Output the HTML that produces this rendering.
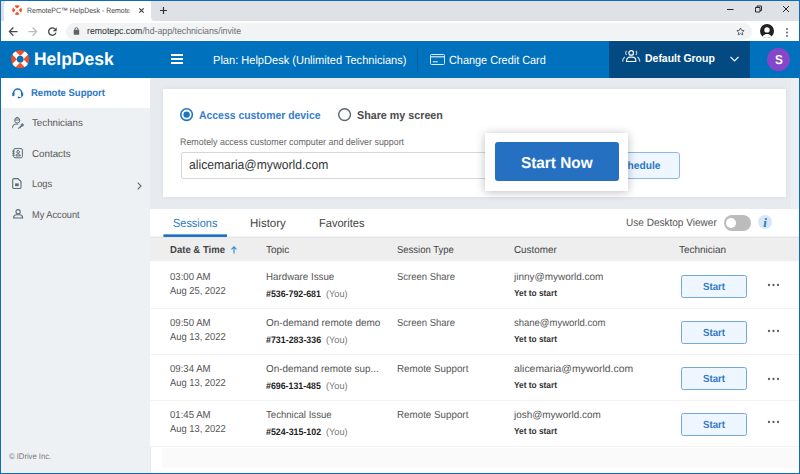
<!DOCTYPE html>
<html lang="en">
<head>
<meta charset="utf-8">
<title>RemotePC HelpDesk - Remote Support</title>
<style>
*{box-sizing:border-box;margin:0;padding:0}
html,body{width:800px;height:474px;overflow:hidden;background:#e7eaef}
body{position:relative;font-family:"Liberation Sans",sans-serif}
.a{position:absolute}
.t{position:absolute;white-space:nowrap;line-height:1;transform-origin:0 0;text-rendering:geometricPrecision;font-family:"Liberation Sans",sans-serif}
svg{position:absolute;overflow:visible}
</style>
</head>
<body>
<!-- browser chrome -->
<div class="a" style="left:0;top:0;width:800px;height:21px;background:#dee1e6"></div>
<div class="a" style="left:4px;top:1px;width:147px;height:20px;background:#fff;border-radius:4px 0 0 0"></div>
<svg style="left:151px;top:16.5px" width="4.5" height="4.5" viewBox="0 0 4.5 4.5"><path d="M0 4.5H4.5A4.5 4.5 0 0 1 0 0z" fill="#fff"/></svg>
<div class="a" style="left:0;top:20.5px;width:800px;height:21px;background:#fff"></div>
<div class="a" style="left:65.6px;top:23px;width:686.4px;height:17px;border-radius:9px;background:#f1f3f4"></div>
<!-- favicon -->
<svg style="left:12px;top:5px" width="10.2" height="10.2" viewBox="-9.2 -9.2 18.4 18.4"><circle r="6.2" fill="none" stroke="#e9522c" stroke-width="5"/><g clip-path="url(#ringc)" fill="#fff"><rect x="-10" y="-2" width="20" height="4" transform="rotate(45)"/><rect x="-10" y="-2" width="20" height="4" transform="rotate(-45)"/></g><circle r="3.4" fill="#fff"/></svg>
<div class="a" style="left:127px;top:4px;width:5px;height:14px;background:linear-gradient(90deg,rgba(255,255,255,0),#fff 95%);z-index:40"></div>
<!-- tab close, plus -->
<svg style="left:139px;top:8.2px" width="5" height="5" viewBox="0 0 5 5"><path d="M0.3 0.3l4.4 4.4M4.7 0.3l-4.4 4.4" stroke="#3a3d41" stroke-width="1.15" fill="none"/></svg>
<svg style="left:159.5px;top:7px" width="7" height="7" viewBox="0 0 7 7"><path d="M3.5 0v7M0 3.5h7" stroke="#333" stroke-width="1.2" fill="none"/></svg>
<!-- window controls -->
<svg style="left:727px;top:5px" width="62" height="9" viewBox="0 0 62 9"><g stroke="#2a2a2a" stroke-width="1" fill="none"><path d="M0 4.5h6.5"/><path d="M28.5 2.5h4.5v4.5h-4.5zM30 2.5v-1.5h4.5v4.5h-1.5"/><path d="M56 1l6 6M62 1l-6 6"/></g></svg>
<!-- nav icons -->
<svg style="left:0;top:20px" width="90" height="22" viewBox="0 0 90 22"><g fill="none" stroke-width="1.25"><path d="M13.4 7.5L9.4 11.6l4 4.1M9.7 11.6h7.8" stroke="#45484c"/><path d="M32.6 7.5l4 4.1-4 4.1M36.3 11.6h-7.8" stroke="#b9bcc0"/><path d="M54.9 8.9A3.7 3.7 0 1 0 55.9 12.6" stroke="#45484c" stroke-width="1.3"/><path d="M56.7 7.2v4h-4z" fill="#45484c" stroke="none"/></g>
<rect x="73.7" y="9.8" width="5.5" height="4.9" rx="0.6" fill="#5f6368"/><path d="M74.9 10V9.2a1.55 1.55 0 0 1 3.1 0V10" fill="none" stroke="#5f6368" stroke-width="0.95"/></svg>
<!-- star -->
<svg style="left:736.1px;top:27.2px" width="9" height="9" viewBox="0 0 24 24"><path d="M12 2.5l2.9 6.3 6.8.8-5 4.7 1.3 6.8-6-3.4-6 3.4 1.3-6.8-5-4.7 6.8-.8z" fill="none" stroke="#4a4d51" stroke-width="2.3" stroke-linejoin="round"/></svg>
<!-- profile -->
<svg style="left:760px;top:24.4px" width="14" height="14" viewBox="0 0 14 14"><defs><clipPath id="pc"><circle cx="7" cy="7" r="7"/></clipPath></defs><circle cx="7" cy="7" r="7" fill="#202124"/><circle cx="7" cy="5.9" r="2.7" fill="#fff"/><ellipse cx="7" cy="14" rx="4.7" ry="4" fill="#fff" clip-path="url(#pc)"/></svg>
<svg style="left:785.7px;top:27.5px" width="2" height="9" viewBox="0 0 2 9"><circle cx="1" cy="1" r="0.9" fill="#505357"/><circle cx="1" cy="4.5" r="0.9" fill="#505357"/><circle cx="1" cy="8" r="0.9" fill="#505357"/></svg>

<!-- app header -->
<div class="a" style="left:0;top:41px;width:800px;height:36.5px;background:#0071bd"></div>
<div class="a" style="left:609px;top:41px;width:141px;height:36.5px;background:#034a82"></div>
<div class="a" style="left:417px;top:47.5px;width:1px;height:24.5px;background:#0a5ea6"></div>
<!-- logo -->
<svg style="left:11.1px;top:49.6px" width="18.4" height="18.4" viewBox="-9.2 -9.2 18.4 18.4"><defs><clipPath id="ringc"><path clip-rule="evenodd" d="M-9.1 0a9.1 9.1 0 1 0 18.2 0a9.1 9.1 0 1 0-18.2 0zM-3.5 0a3.5 3.5 0 1 1 7 0a3.5 3.5 0 1 1-7 0z"/></clipPath></defs><circle r="6.3" fill="none" stroke="#e9522c" stroke-width="5.6"/><g clip-path="url(#ringc)" fill="#fff"><rect x="-10" y="-2.3" width="20" height="4.6" transform="rotate(45)"/><rect x="-10" y="-2.3" width="20" height="4.6" transform="rotate(-45)"/></g></svg>
<!-- hamburger -->
<div class="a" style="left:171px;top:54px;width:12px;height:2px;background:#fff"></div>
<div class="a" style="left:171px;top:58px;width:12px;height:2px;background:#fff"></div>
<div class="a" style="left:171px;top:62px;width:12px;height:2px;background:#fff"></div>
<!-- card icon -->
<svg style="left:430px;top:54px" width="15" height="11" viewBox="0 0 15 11"><rect x="0.5" y="0.5" width="14" height="10" rx="1" fill="none" stroke="#dcebf7" stroke-width="1"/><path d="M0.5 2.8h14" stroke="#dcebf7" stroke-width="1.2"/><path d="M2.8 7.8h5" stroke="#dcebf7" stroke-width="1.1"/></svg>
<!-- group icon -->
<svg style="left:621.7px;top:50.3px" width="18.4" height="12.2" viewBox="0 0 18.4 12.2"><g fill="none" stroke="#fff" stroke-width="1.15"><circle cx="9.2" cy="2.9" r="2.3"/><path d="M4.6 11.5v-1a3.4 3.4 0 0 1 3.4-3.4h2.4a3.4 3.4 0 0 1 3.4 3.4v1z" stroke-linejoin="round"/><g opacity="0.75"><path d="M4.6 0.9a2.6 2.6 0 0 0 0 4"/><path d="M13.8 0.9a2.6 2.6 0 0 1 0 4"/><path d="M0.7 11.6a5 5 0 0 1 2.3-4.6"/><path d="M17.7 11.6a5 5 0 0 0-2.3-4.6"/></g></g></svg>
<!-- chevron -->
<svg style="left:730px;top:56px" width="9" height="6" viewBox="0 0 9 6"><path d="M0.5 0.8l4 4 4-4" fill="none" stroke="#fff" stroke-width="1.2"/></svg>
<!-- avatar -->
<div class="a" style="left:766.5px;top:47.5px;width:23px;height:23px;border-radius:50%;background:#8546c9"></div>

<!-- sidebar -->
<div class="a" style="left:0;top:77.5px;width:150px;height:397px;background:#eef1f4"></div>
<div class="a" style="left:0;top:77.5px;width:150px;height:30px;background:#fff"></div>
<!-- sidebar icons -->
<svg style="left:12px;top:87.5px" width="11.4" height="10.4" viewBox="0 0 11.4 10.4"><path d="M1.6 6.2V5.2a4.1 4.1 0 0 1 8.2 0v1" fill="none" stroke="#1f6fc6" stroke-width="1.5"/><rect x="0.2" y="4.4" width="2.2" height="3.8" rx="1" fill="#1f6fc6"/><rect x="9" y="4.4" width="2.2" height="3.8" rx="1" fill="#1f6fc6"/><path d="M10.2 7.6c0 1.3-1.2 1.9-3.2 1.9" fill="none" stroke="#1f6fc6" stroke-width="1"/><circle cx="6.6" cy="9.5" r="0.9" fill="#1f6fc6"/></svg>
<svg style="left:12px;top:116.6px" width="12" height="12" viewBox="0 0 12 12"><g fill="none" stroke="#5b6b78" stroke-width="1"><circle cx="5.2" cy="3.4" r="2.6"/><path d="M2.8 3h4.8M3.6 1.3a2.2 2.2 0 0 1 3.2 0"/><path d="M0.6 11.2v-0.9a3.2 3.2 0 0 1 3.2-3.2h2.4"/><path d="M6 11.2h1.2"/><path d="M7.4 10.9l3.4-3.4" stroke-width="1.5"/><circle cx="10.3" cy="7.9" r="1.1"/></g></svg>
<svg style="left:12px;top:147.8px" width="11" height="10.4" viewBox="0 0 11 10.4"><g fill="none" stroke="#5b6b78" stroke-width="1"><rect x="1.7" y="0.6" width="8.7" height="9.2" rx="1.3"/><path d="M0.2 3.2h2.4M0.2 5.2h2.4M0.2 7.2h2.4"/><circle cx="6.1" cy="3.9" r="1.35"/><path d="M3.9 7.9a2.2 2 0 0 1 4.4 0z"/></g></svg>
<svg style="left:12px;top:178px" width="10" height="11" viewBox="0 0 10 11"><g fill="none" stroke="#5b6b78" stroke-width="1.1"><path d="M2 0.6h3.9l3.1 3v5.6a1.3 1.3 0 0 1-1.3 1.3H2a1.3 1.3 0 0 1-1.3-1.3V1.9a1.3 1.3 0 0 1 1.3-1.3z"/><rect x="3.1" y="5.4" width="3.6" height="2.8" fill="#5b6b78" stroke="none"/></g></svg>
<svg style="left:13.1px;top:209.2px" width="10.2" height="9.6" viewBox="0 0 10.2 9.6"><g fill="none" stroke="#5b6b78" stroke-width="1.1"><circle cx="5.1" cy="2.7" r="2.1"/><path d="M0.6 9v-0.3a3 3 0 0 1 3-3h3a3 3 0 0 1 3 3v0.3z"/></g></svg>
<svg style="left:136.5px;top:181.5px" width="5" height="8" viewBox="0 0 5 8"><path d="M0.7 0.7l3.3 3.3-3.3 3.3" fill="none" stroke="#666" stroke-width="1.1"/></svg>

<div class="a" style="left:790.5px;top:77.5px;width:9px;height:131px;background:#eceff3"></div>
<!-- card 1 -->
<div class="a" style="left:163px;top:88.5px;width:623px;height:108.5px;background:#fff;box-shadow:0 0 4px rgba(0,0,0,.07)"></div>
<svg style="left:180px;top:108.2px" width="13.2" height="13.2" viewBox="0 0 13.2 13.2"><circle cx="6.6" cy="6.6" r="5.8" fill="#fff" stroke="#1c74c4" stroke-width="1.6"/><circle cx="6.6" cy="6.6" r="3.2" fill="#1c74c4"/></svg>
<svg style="left:338.2px;top:108.2px" width="13.2" height="13.2" viewBox="0 0 13.2 13.2"><circle cx="6.6" cy="6.6" r="5.9" fill="#fff" stroke="#5a6672" stroke-width="1.4"/></svg>
<div class="a" style="left:180.8px;top:152px;width:330px;height:27px;border:1px solid #d6d6d6;border-radius:2px;background:#fff"></div>
<div class="a" style="left:598px;top:152px;width:81.6px;height:27px;border:1px solid #8db9e6;border-radius:3px;background:#eef6ff"></div>
<!-- popup -->
<div class="a" style="left:485px;top:133px;width:143px;height:57.5px;background:#fff;box-shadow:0 1px 9px rgba(0,0,0,.26);z-index:20"></div>
<div class="a" style="left:494.7px;top:142.4px;width:124.3px;height:38.6px;background:#2570c1;border-radius:3px;z-index:21"></div>

<!-- table card -->
<div class="a" style="left:150px;top:208.6px;width:650px;height:266px;background:#fff"></div>
<div class="a" style="left:162px;top:448px;width:635.7px;height:20px;background:#fafafa"></div>
<div class="a" style="left:150px;top:447.3px;width:1px;height:27px;background:#e4e9ef"></div>
<svg style="left:163px;top:234px;z-index:3" width="65" height="4" viewBox="0 0 65 4"><rect x="0.4" y="0.35" width="63.6" height="2.6" fill="#1b6fc4"/></svg>
<div class="a" style="left:150px;top:236px;width:650px;height:1px;background:#f3f3f3"></div><div class="a" style="left:150px;top:237px;width:650px;height:24px;background:#eee;border-top:1px solid #e6e6e6"></div>
<!-- sort arrow -->
<svg style="left:230.5px;top:245.5px" width="6" height="8" viewBox="0 0 6 8"><path d="M3 7.6V0.8M0.5 3.3L3 0.8l2.5 2.5" fill="none" stroke="#2a8be0" stroke-width="1.1"/></svg>
<!-- toggle -->
<div class="a" style="left:723.6px;top:215px;width:27.8px;height:15.5px;border-radius:8px;background:#bcbcbc"></div>
<div class="a" style="left:726px;top:217.5px;width:10.4px;height:10.4px;border-radius:50%;background:#fff"></div>
<!-- info -->
<div class="a" style="left:758.3px;top:215.3px;width:14px;height:14px;border-radius:50%;background:#d6e7f9"></div>
<span class="t" style="left:763.2px;top:215.6px;font-family:'Liberation Serif',serif;font-style:italic;font-weight:700;font-size:13px;color:#2a77c5">i</span>
<!-- row separators -->
<div class="a" style="left:150px;top:307.5px;width:650px;height:1px;background:#f3f3f3"></div>
<div class="a" style="left:150px;top:353.5px;width:650px;height:1px;background:#f3f3f3"></div>
<div class="a" style="left:150px;top:399.5px;width:650px;height:1px;background:#f3f3f3"></div>
<div class="a" style="left:150px;top:445.5px;width:650px;height:1px;background:#f3f3f3"></div>
<div class="a" style="left:681px;top:275.2px;width:65.8px;height:22.9px;border:1px solid #74a7dc;border-radius:2.5px;background:#eef6ff"></div>
<svg style="left:767px;top:282.7px" width="13" height="4" viewBox="0 0 13 4"><g fill="#5e5e5e"><circle cx="2" cy="2" r="1.15"/><circle cx="6.5" cy="2" r="1.15"/><circle cx="11" cy="2" r="1.15"/></g></svg>
<div class="a" style="left:681px;top:321.2px;width:65.8px;height:22.9px;border:1px solid #74a7dc;border-radius:2.5px;background:#eef6ff"></div>
<svg style="left:767px;top:329.1px" width="13" height="4" viewBox="0 0 13 4"><g fill="#5e5e5e"><circle cx="2" cy="2" r="1.15"/><circle cx="6.5" cy="2" r="1.15"/><circle cx="11" cy="2" r="1.15"/></g></svg>
<div class="a" style="left:681px;top:367.2px;width:65.8px;height:22.9px;border:1px solid #74a7dc;border-radius:2.5px;background:#eef6ff"></div>
<svg style="left:767px;top:377.1px" width="13" height="4" viewBox="0 0 13 4"><g fill="#5e5e5e"><circle cx="2" cy="2" r="1.15"/><circle cx="6.5" cy="2" r="1.15"/><circle cx="11" cy="2" r="1.15"/></g></svg>
<div class="a" style="left:681px;top:413.2px;width:65.8px;height:22.9px;border:1px solid #74a7dc;border-radius:2.5px;background:#eef6ff"></div>
<svg style="left:767px;top:420.4px" width="13" height="4" viewBox="0 0 13 4"><g fill="#5e5e5e"><circle cx="2" cy="2" r="1.15"/><circle cx="6.5" cy="2" r="1.15"/><circle cx="11" cy="2" r="1.15"/></g></svg>
<span class="t" id="tabtitle" style="left:26.84px;top:7.00px;font-size:7.6px;font-weight:400;color:#45484c;transform:scaleX(0.9149)">RemotePC™ HelpDesk - Remote</span>
<span class="t"  style="left:86.51px;top:27.00px;font-size:9.5px;font-weight:400;color:#2c2f33;transform:scaleX(0.9203)">remotepc.com<span style="color:#6b6f73">/hd-app/technicians/invite</span></span>
<span class="t"  style="left:33.59px;top:50.00px;font-size:18px;font-weight:700;color:#fff;transform:scaleX(0.9709)">HelpDesk</span>
<span class="t"  style="left:212.66px;top:55.00px;font-size:11.8px;font-weight:400;color:#fff;transform:scaleX(0.9374)">Plan: HelpDesk (Unlimited Technicians)</span>
<span class="t"  style="left:449.14px;top:55.00px;font-size:11.8px;font-weight:400;color:#fff;transform:scaleX(0.9224)">Change Credit Card</span>
<span class="t"  style="left:644.51px;top:54.00px;font-size:11.3px;font-weight:700;color:#fff;transform:scaleX(0.9266)">Default Group</span>
<span class="t"  style="left:774.55px;top:53.00px;font-size:13px;font-weight:700;color:#fff;transform:scaleX(0.9032)">S</span>
<span class="t"  style="left:31.29px;top:89.00px;font-size:10px;font-weight:700;color:#2a77c5;transform:scaleX(0.9506)">Remote Support</span>
<span class="t"  style="left:31.76px;top:119.00px;font-size:10px;font-weight:400;color:#555;transform:scaleX(0.9720)">Technicians</span>
<span class="t"  style="left:31.51px;top:150.00px;font-size:10px;font-weight:400;color:#555;transform:scaleX(0.9766)">Contacts</span>
<span class="t"  style="left:31.80px;top:180.00px;font-size:10px;font-weight:400;color:#555;transform:scaleX(0.9317)">Logs</span>
<span class="t"  style="left:31.61px;top:211.00px;font-size:10px;font-weight:400;color:#555;transform:scaleX(0.9216)">My Account</span>
<span class="t"  style="left:9.00px;top:453.00px;font-size:8.2px;font-weight:400;color:#777;transform:scaleX(0.9326)">© IDrive Inc.</span>
<span class="t"  style="left:198.77px;top:111.00px;font-size:11.3px;font-weight:700;color:#337dcb;transform:scaleX(0.9219)">Access customer device</span>
<span class="t"  style="left:356.76px;top:111.00px;font-size:11.3px;font-weight:700;color:#4a4a4a;transform:scaleX(0.9497)">Share my screen</span>
<span class="t"  style="left:180.30px;top:138.00px;font-size:9.5px;font-weight:400;color:#666;transform:scaleX(0.9347)">Remotely access customer computer and deliver support</span>
<span class="t"  style="left:188.73px;top:158.00px;font-size:13px;font-weight:400;color:#333;transform:scaleX(0.9347)">alicemaria@myworld.com</span>
<span class="t"  style="left:614.76px;top:161.00px;font-size:10.8px;font-weight:700;color:#2a77c5;transform:scaleX(0.9474)">Schedule</span>
<span class="t"  style="left:172.94px;top:218.00px;font-size:11.8px;font-weight:400;color:#2a77c5;transform:scaleX(0.9277)">Sessions</span>
<span class="t"  style="left:250.12px;top:218.00px;font-size:11.8px;font-weight:400;color:#444;transform:scaleX(0.9762)">History</span>
<span class="t"  style="left:319.36px;top:218.00px;font-size:11.8px;font-weight:400;color:#444;transform:scaleX(0.9383)">Favorites</span>
<span class="t"  style="left:625.90px;top:218.00px;font-size:10.7px;font-weight:400;color:#555;transform:scaleX(0.9389)">Use Desktop Viewer</span>
<span class="t"  style="left:169.80px;top:246.00px;font-size:10.2px;font-weight:700;color:#444;transform:scaleX(0.9374)">Date &amp; Time</span>
<span class="t"  style="left:266.25px;top:246.00px;font-size:10.2px;font-weight:400;color:#444;transform:scaleX(0.9806)">Topic</span>
<span class="t"  style="left:396.54px;top:246.00px;font-size:10.2px;font-weight:400;color:#444;transform:scaleX(0.9300)">Session Type</span>
<span class="t"  style="left:513.92px;top:246.00px;font-size:10.2px;font-weight:400;color:#444;transform:scaleX(0.9678)">Customer</span>
<span class="t"  style="left:679.26px;top:246.00px;font-size:10.2px;font-weight:400;color:#444;transform:scaleX(0.9757)">Technician</span>
<span class="t"  style="left:169.53px;top:273.00px;font-size:10.2px;font-weight:400;color:#555;transform:scaleX(0.9437)">03:00 AM</span>
<span class="t"  style="left:170.00px;top:287.00px;font-size:10.2px;font-weight:400;color:#555;transform:scaleX(0.9178)">Aug 25, 2022</span>
<span class="t"  style="left:265.78px;top:273.00px;font-size:10.2px;font-weight:400;color:#555;transform:scaleX(0.9573)">Hardware Issue</span>
<span class="t"  style="left:266.27px;top:289.00px;font-size:9.4px;font-weight:700;color:#222;transform:scaleX(0.9397)">#536-792-681</span>
<span class="t"  style="left:325.51px;top:289.00px;font-size:9.4px;font-weight:400;color:#777;transform:scaleX(0.9762)">(You)</span>
<span class="t"  style="left:396.53px;top:273.00px;font-size:10.2px;font-weight:400;color:#555;transform:scaleX(0.9306)">Screen Share</span>
<span class="t"  style="left:513.64px;top:273.00px;font-size:10.2px;font-weight:400;color:#555;transform:scaleX(0.9791)">jinny@myworld.com</span>
<span class="t"  style="left:514.17px;top:289.00px;font-size:8.9px;font-weight:700;color:#333;transform:scaleX(0.9363)">Yet to start</span>
<span class="t"  style="left:702.63px;top:283.00px;font-size:10.4px;font-weight:700;color:#3478c6;transform:scaleX(0.9304)">Start</span>
<span class="t"  style="left:169.53px;top:319.00px;font-size:10.2px;font-weight:400;color:#555;transform:scaleX(0.9437)">09:50 AM</span>
<span class="t"  style="left:170.00px;top:333.00px;font-size:10.2px;font-weight:400;color:#555;transform:scaleX(0.9178)">Aug 13, 2022</span>
<span class="t"  style="left:266.01px;top:319.00px;font-size:10.2px;font-weight:400;color:#555;transform:scaleX(0.9806)">On-demand remote demo</span>
<span class="t"  style="left:266.26px;top:335.00px;font-size:9.4px;font-weight:700;color:#222;transform:scaleX(0.9437)">#731-283-336</span>
<span class="t"  style="left:325.51px;top:335.00px;font-size:9.4px;font-weight:400;color:#777;transform:scaleX(0.9762)">(You)</span>
<span class="t"  style="left:396.53px;top:319.00px;font-size:10.2px;font-weight:400;color:#555;transform:scaleX(0.9306)">Screen Share</span>
<span class="t"  style="left:514.17px;top:319.00px;font-size:10.2px;font-weight:400;color:#555;transform:scaleX(0.9316)">shane@myworld.com</span>
<span class="t"  style="left:514.17px;top:335.00px;font-size:8.9px;font-weight:700;color:#333;transform:scaleX(0.9363)">Yet to start</span>
<span class="t"  style="left:702.63px;top:329.00px;font-size:10.4px;font-weight:700;color:#3478c6;transform:scaleX(0.9304)">Start</span>
<span class="t"  style="left:169.53px;top:365.00px;font-size:10.2px;font-weight:400;color:#555;transform:scaleX(0.9437)">09:34 AM</span>
<span class="t"  style="left:170.00px;top:379.00px;font-size:10.2px;font-weight:400;color:#555;transform:scaleX(0.9178)">Aug 13, 2022</span>
<span class="t"  style="left:266.01px;top:365.00px;font-size:10.2px;font-weight:400;color:#555;transform:scaleX(0.9717)">On-demand remote sup...</span>
<span class="t"  style="left:266.27px;top:381.00px;font-size:9.4px;font-weight:700;color:#222;transform:scaleX(0.9397)">#696-131-485</span>
<span class="t"  style="left:325.51px;top:381.00px;font-size:9.4px;font-weight:400;color:#777;transform:scaleX(0.9762)">(You)</span>
<span class="t"  style="left:397.08px;top:365.00px;font-size:10.2px;font-weight:400;color:#555;transform:scaleX(0.9619)">Remote Support</span>
<span class="t"  style="left:513.89px;top:365.00px;font-size:10.2px;font-weight:400;color:#555;transform:scaleX(1.0203)">alicemaria@myworld.com</span>
<span class="t"  style="left:514.17px;top:381.00px;font-size:8.9px;font-weight:700;color:#333;transform:scaleX(0.9363)">Yet to start</span>
<span class="t"  style="left:702.63px;top:375.00px;font-size:10.4px;font-weight:700;color:#3478c6;transform:scaleX(0.9304)">Start</span>
<span class="t"  style="left:169.53px;top:411.00px;font-size:10.2px;font-weight:400;color:#555;transform:scaleX(0.9437)">01:45 AM</span>
<span class="t"  style="left:170.00px;top:425.00px;font-size:10.2px;font-weight:400;color:#555;transform:scaleX(0.9178)">Aug 13, 2022</span>
<span class="t"  style="left:266.26px;top:411.00px;font-size:10.2px;font-weight:400;color:#555;transform:scaleX(0.9420)">Technical Issue</span>
<span class="t"  style="left:266.26px;top:427.00px;font-size:9.4px;font-weight:700;color:#222;transform:scaleX(0.9437)">#524-315-102</span>
<span class="t"  style="left:325.51px;top:427.00px;font-size:9.4px;font-weight:400;color:#777;transform:scaleX(0.9762)">(You)</span>
<span class="t"  style="left:397.08px;top:411.00px;font-size:10.2px;font-weight:400;color:#555;transform:scaleX(0.9619)">Remote Support</span>
<span class="t"  style="left:513.64px;top:411.00px;font-size:10.2px;font-weight:400;color:#555;transform:scaleX(0.9758)">josh@myworld.com</span>
<span class="t"  style="left:514.17px;top:427.00px;font-size:8.9px;font-weight:700;color:#333;transform:scaleX(0.9363)">Yet to start</span>
<span class="t"  style="left:702.63px;top:421.00px;font-size:10.4px;font-weight:700;color:#3478c6;transform:scaleX(0.9304)">Start</span>
<span class="t"  style="left:521.21px;top:156.00px;font-size:15.8px;font-weight:700;color:#fff;transform:scaleX(0.9706);z-index:30">Start Now</span>
<!-- window border -->
<div class="a" style="left:0;top:0;width:800px;height:474px;border:1.3px solid #0f6cbd;border-bottom-width:1.5px;z-index:50;pointer-events:none"></div>
</body>
</html>
